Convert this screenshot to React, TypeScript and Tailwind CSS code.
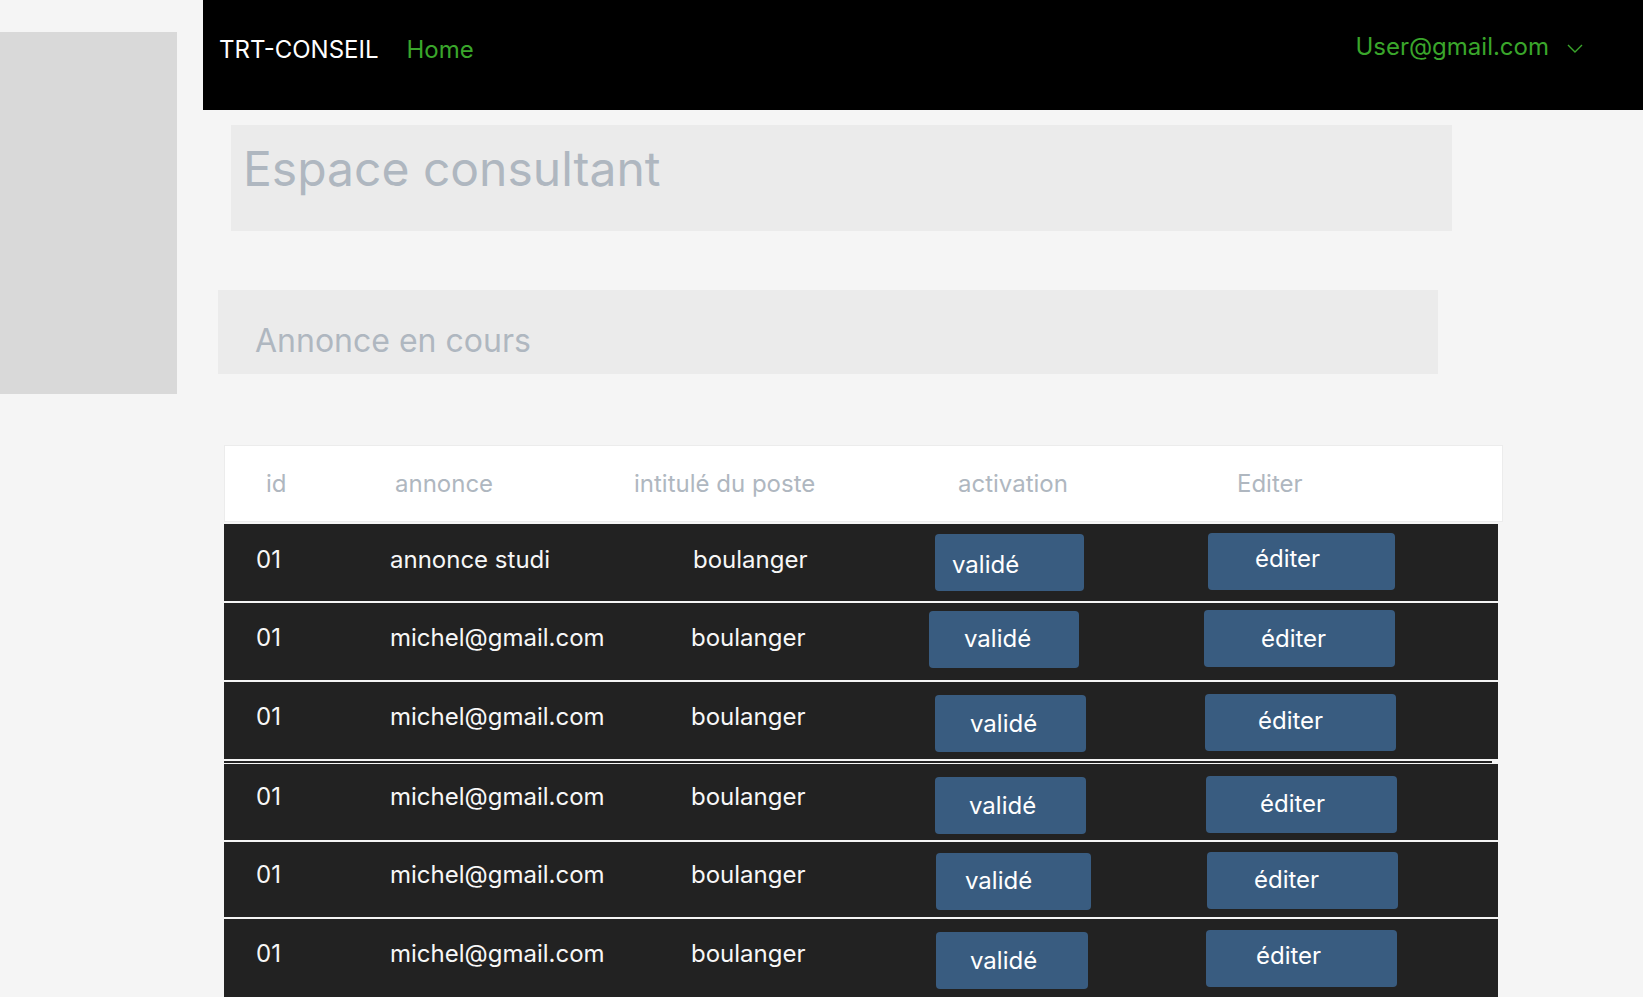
type Row = {
  id: string;
  annonce: string;
  poste: string;
  rowCls: string;
  textPt: string;
  posteCls: string;
  validCls: string;
  editCls: string;
};

// per-row offsets follow the screenshot, which is not perfectly aligned
const rows: Row[] = [
  {
    id: "01",
    annonce: "annonce studi",
    poste: "boulanger",
    rowCls: "h-[77px]",
    textPt: "pt-[21px]",
    posteCls: "pl-[2px]",
    validCls: "ml-[6px] mt-[10px] w-[149px] pl-[17px] pt-[16px]",
    editCls: "ml-[4px] mt-[9px] w-[187px] pl-[47px] pt-[11px]",
  },
  {
    id: "01",
    annonce: "michel@gmail.com",
    poste: "boulanger",
    rowCls: "h-[77px]",
    textPt: "pt-[20px]",
    posteCls: "",
    validCls: "ml-[0px] mt-[8px] w-[150px] pl-[35px] pt-[13px]",
    editCls: "ml-[0px] mt-[7px] w-[191px] pl-[57px] pt-[14px]",
  },
  {
    id: "01",
    annonce: "michel@gmail.com",
    poste: "boulanger",
    rowCls: "h-[77px]",
    textPt: "pt-[20px]",
    posteCls: "",
    validCls: "ml-[6px] mt-[13px] w-[151px] pl-[35px] pt-[14px]",
    editCls: "ml-[1px] mt-[12px] w-[191px] pl-[53px] pt-[12px]",
  },
  {
    id: "01",
    annonce: "michel@gmail.com",
    poste: "boulanger",
    rowCls: "h-[76px]",
    textPt: "pt-[18px]",
    posteCls: "",
    validCls: "ml-[6px] mt-[13px] w-[151px] pl-[34px] pt-[14px]",
    editCls: "ml-[2px] mt-[12px] w-[191px] pl-[54px] pt-[13px]",
  },
  {
    id: "01",
    annonce: "michel@gmail.com",
    poste: "boulanger",
    rowCls: "h-[75px]",
    textPt: "pt-[18px]",
    posteCls: "",
    validCls: "ml-[7px] mt-[11px] w-[155px] pl-[29px] pt-[13px]",
    editCls: "ml-[3px] mt-[10px] w-[191px] pl-[47px] pt-[13px]",
  },
  {
    id: "01",
    annonce: "michel@gmail.com",
    poste: "boulanger",
    rowCls: "h-[78px]",
    textPt: "pt-[20px]",
    posteCls: "",
    validCls: "ml-[7px] mt-[13px] w-[152px] pl-[34px] pt-[14px]",
    editCls: "ml-[2px] mt-[11px] w-[191px] pl-[50px] pt-[11px]",
  },
];

function TableRow({ row }: { row: Row }) {
  return (
    <div className={`flex w-[1274px] items-start bg-[#222222] pl-[32px] text-[24px] leading-[29px] text-[#f7f7f7] ${row.rowCls}`}>
      <div className={`w-[134px] ${row.textPt}`}>{row.id}</div>
      <div className={`w-[301px] ${row.textPt}`}>{row.annonce}</div>
      <div className={`w-[238px] ${row.textPt} ${row.posteCls}`}>{row.poste}</div>
      <div className="w-[275px]">
        <button className={`flex h-[57px] items-start rounded-[4px] bg-[#395c80] text-left text-white ${row.validCls}`}>
          validé
        </button>
      </div>
      <div>
        <button className={`flex h-[57px] items-start rounded-[4px] bg-[#395c80] text-left text-white ${row.editCls}`}>
          éditer
        </button>
      </div>
    </div>
  );
}

export default function App() {
  return (
    <div className="flex min-h-screen overflow-hidden bg-[#f5f5f5] font-[Inter,sans-serif]">
      {/* left gray panel */}
      <aside className="w-[177px] shrink-0 pt-[32px]">
        <div className="h-[362px] bg-[#d9d9d9]" />
      </aside>

      <main className="ml-[26px] flex-1">
        {/* top bar */}
        <header className="flex h-[110px] items-start justify-between bg-black pl-[16px] pr-[60px] text-[24px] leading-[29px]">
          <div className="flex pt-[35px]">
            <span className="text-white">TRT-CONSEIL</span>
            <a className="ml-[28px] text-[#3aa62b]">Home</a>
          </div>
          <div className="flex items-center pt-[32px] text-[#3aa62b]">
            <span>User@gmail.com</span>
            <svg className="ml-[18px] mt-[4px]" width="16" height="9" viewBox="0 0 16 9" fill="none">
              <path d="M1 1l7 7 7-7" stroke="#3aa62b" strokeWidth="1.4" />
            </svg>
          </div>
        </header>

        <div className="ml-[28px] mt-[15px] h-[106px] w-[1221px] bg-[#ebebeb] pl-[12px] pt-[15px]">
          <h1 className="text-[48px] leading-[58px] text-[#afb7c0]">Espace consultant</h1>
        </div>

        <div className="ml-[15px] mt-[59px] h-[84px] w-[1220px] bg-[#ebebeb] pl-[37px] pt-[31px]">
          <h2 className="text-[32px] leading-[39px] text-[#afb7c0]">Annonce en cours</h2>
        </div>

        {/* table */}
        <div className="ml-[21px] mt-[71px] flex flex-col">
          <div className="flex h-[77px] w-[1279px] items-center border border-[#ececec] bg-white pl-[41px] text-[24px] leading-[29px] text-[#afb7c0]">
            <div className="w-[129px]">id</div>
            <div className="w-[239px]">annonce</div>
            <div className="w-[324px]">intitulé du poste</div>
            <div className="w-[279px]">activation</div>
            <div>Editer</div>
          </div>

          <div className="mt-[2px] flex flex-col gap-[2px]">
            <TableRow row={rows[0]} />
            <TableRow row={rows[1]} />
            <div className="-mb-[1px] flex flex-col">
              <TableRow row={rows[2]} />
              <div className="mt-[2px] h-[2px] w-[1268px] bg-[#222222]" />
            </div>
            <TableRow row={rows[3]} />
            <TableRow row={rows[4]} />
            <TableRow row={rows[5]} />
          </div>
        </div>
      </main>
    </div>
  );
}
